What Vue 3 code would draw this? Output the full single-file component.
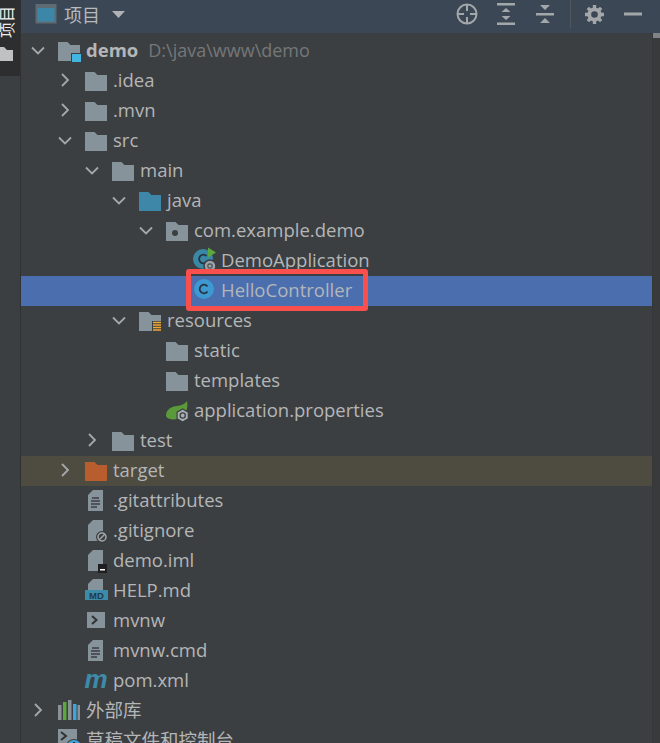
<script setup>
const rows = [
  { d: 0, arrow: 'down', icon: 'module', name: 'demo', bold: true, hint: 'D:\\java\\www\\demo' },
  { d: 1, arrow: 'right', icon: 'folder', name: '.idea' },
  { d: 1, arrow: 'right', icon: 'folder', name: '.mvn' },
  { d: 1, arrow: 'down', icon: 'folder', name: 'src' },
  { d: 2, arrow: 'down', icon: 'folder', name: 'main' },
  { d: 3, arrow: 'down', icon: 'source', name: 'java' },
  { d: 4, arrow: 'down', icon: 'package', name: 'com.example.demo' },
  { d: 5, icon: 'app', name: 'DemoApplication' },
  { d: 5, icon: 'class', name: 'HelloController', selected: true },
  { d: 3, arrow: 'down', icon: 'resources', name: 'resources' },
  { d: 4, icon: 'folder', name: 'static' },
  { d: 4, icon: 'folder', name: 'templates' },
  { d: 4, icon: 'spring', name: 'application.properties' },
  { d: 2, arrow: 'right', icon: 'folder', name: 'test' },
  { d: 1, arrow: 'right', icon: 'excluded', name: 'target', tinted: true },
  { d: 1, icon: 'text', name: '.gitattributes' },
  { d: 1, icon: 'ignore', name: '.gitignore' },
  { d: 1, icon: 'iml', name: 'demo.iml' },
  { d: 1, icon: 'md', name: 'HELP.md' },
  { d: 1, icon: 'shell', name: 'mvnw' },
  { d: 1, icon: 'text', name: 'mvnw.cmd' },
  { d: 1, icon: 'maven', name: 'pom.xml' },
  { d: 0, arrow: 'right', icon: 'libs', name: '外部库' },
  { d: 0, icon: 'scratch', name: '草稿文件和控制台' }
]
const folderPath = 'M0 3h9.500l3 3H22v16H0z'
const pagePath = 'M8 1h10v21H3V6z'
</script>

<template>
  <div class="window">
    <aside class="side">
      <div class="side-tab">
        <span class="side-label">项目</span>
        <svg class="side-folder" width="20" height="14" viewBox="0 0 20 14"><path d="M-6 0h10l3 3h6v11H-6z" fill="#bfc2c3" /></svg>
      </div>
    </aside>

    <main class="panel">
      <header class="toolbar">
        <svg class="panel-icon" width="22" height="22" viewBox="0 0 22 22">
          <rect x="0.500" y="1" width="21" height="19.500" fill="#5f6a72" />
          <rect x="2.500" y="5" width="17" height="13.500" fill="#3c87a8" />
        </svg>
        <span class="title">项目</span>
        <svg class="caret" width="14" height="9" viewBox="0 0 14 9"><path d="M0 1h13L6.500 8z" fill="#b0b3b5" /></svg>
        <div class="tools">
          <svg width="22" height="22" viewBox="0 0 22 22" fill="none" stroke="#a3a7aa" stroke-width="2">
            <circle cx="11" cy="11" r="9.500" />
            <path d="M11 2v6M11 14v6M2 11h6M14 11h6" />
          </svg>
          <svg width="20" height="22" viewBox="0 0 20 22" fill="#a3a7aa">
            <path d="M1 0h18v2.500H1zM1 19.500h18V22H1zM10 5l4.500 4h-9zM10 17l-4.500-4h9z" />
          </svg>
          <svg class="tool-collapse" width="20" height="22" viewBox="0 0 20 22" fill="#a3a7aa">
            <path d="M1 10h18v2.500H1zM5 2h10l-5 5zM5 20h10l-5-5z" />
          </svg>
          <span class="sep"></span>
          <svg class="tool-gear" width="19" height="19" viewBox="0 0 20 20" fill="none" stroke="#a3a7aa">
            <circle cx="10" cy="10" r="5.500" stroke-width="4" />
            <path d="M10 0v4M10 16v4M0 10h4M16 10h4M3 3l3 3M14 14l3 3M17 3l-3 3M6 14l-3 3" stroke-width="3.500" />
          </svg>
          <svg width="18" height="4" viewBox="0 0 18 4"><rect y="0.500" width="18" height="3" fill="#a3a7aa" /></svg>
        </div>
      </header>

      <div class="body">
        <div class="tree">
          <div
            v-for="row in rows"
            :key="row.name"
            class="row"
            :class="{ selected: row.selected, tinted: row.tinted }"
            :style="{ paddingLeft: 10 + row.d * 27 + 'px' }"
          >
            <span class="arrow">
              <svg v-if="row.arrow" width="14" height="14" viewBox="0 0 14 14" fill="none" stroke="#a5a8aa" stroke-width="1.800">
                <path v-if="row.arrow === 'down'" d="M1 4.500 7 10.500l6-6" />
                <path v-else d="M4 1 10 7l-6 6" />
              </svg>
            </span>
            <span class="icon">
              <svg width="26" height="26" viewBox="-2 -2 26 26">
                <template v-if="row.icon === 'folder'"><path :d="folderPath" fill="#87939a" /></template>
                <template v-else-if="row.icon === 'module'">
                  <path :d="folderPath" fill="#87939a" />
                  <rect x="13" y="14" width="10" height="9.500" fill="#3c3f41" />
                  <rect x="14" y="15" width="9" height="8" fill="#40b6e0" />
                </template>
                <template v-else-if="row.icon === 'source'"><path :d="folderPath" fill="#3f87a8" /></template>
                <template v-else-if="row.icon === 'excluded'"><path :d="folderPath" fill="#b85e2e" /></template>
                <template v-else-if="row.icon === 'package'">
                  <path :d="folderPath" fill="#87939a" />
                  <circle cx="9" cy="14" r="3" fill="#3c3f41" />
                </template>
                <template v-else-if="row.icon === 'resources'">
                  <path d="M0 3h9.500l3 3H22v6H13v10H0z" fill="#87939a" />
                  <path d="M14 13.500h8M14 16h8M14 18.500h8M14 21h8" stroke="#f0a732" stroke-width="1.300" />
                </template>
                <template v-else-if="row.icon === 'class'">
                  <circle cx="11" cy="10" r="10" fill="#3d99d1" />
                  <path d="M14.500 7.500a4.300 4.300 0 1 0 0 5" fill="none" stroke="#27343f" stroke-width="1.800" />
                </template>
                <template v-else-if="row.icon === 'app'">
                  <circle cx="10" cy="10" r="10" fill="#3a87a6" />
                  <path d="M13.500 7a4.300 4.300 0 1 0 0 6" fill="none" stroke="#27343f" stroke-width="1.800" />
                  <path d="M15 -1.500l8 5-8 5z" fill="#5aa83e" />
                  <circle cx="17" cy="17" r="6" fill="#9aa4aa" stroke="#3c3f41" stroke-width="1.500" />
                  <circle cx="17" cy="17" r="2.200" fill="none" stroke="#4e5254" stroke-width="1.200" />
                </template>
                <template v-else-if="row.icon === 'spring'">
                  <path d="M0 17C0 10 6 7.500 11 7c4-.500 8-2 10-5 1 6 0 10-3 12l-7 6C6 21 1 20 0 17z" fill="#5b9a3a" />
                  <path d="M16.700 10l5.600 3.200v6.600l-5.600 3.200-5.600-3.200v-6.600z" fill="#a8b0b4" stroke="#3c3f41" stroke-width="1.200" />
                  <circle cx="16.700" cy="16.500" r="2.600" fill="none" stroke="#3c3f41" stroke-width="1.300" />
                </template>
                <template v-else-if="row.icon === 'text'">
                  <path :d="pagePath" fill="#87939a" />
                  <path d="M7 9h7M6 12h9M6 15h9M6 18h6" stroke="#3c3f41" stroke-width="1.300" />
                </template>
                <template v-else-if="row.icon === 'ignore'">
                  <path :d="pagePath" fill="#87939a" />
                  <circle cx="17" cy="18" r="6" fill="#3c3f41" />
                  <circle cx="17" cy="18" r="4" fill="none" stroke="#a0a8ad" stroke-width="1.500" />
                  <path d="M14 21l6-6" stroke="#a0a8ad" stroke-width="1.500" />
                </template>
                <template v-else-if="row.icon === 'iml'">
                  <path :d="pagePath" fill="#87939a" />
                  <rect x="13" y="15" width="9" height="9" fill="#1e1f20" />
                  <rect x="15" y="20" width="5" height="1.500" fill="#fff" />
                </template>
                <template v-else-if="row.icon === 'md'">
                  <path d="M8 0h10v12H3V5z" fill="#87939a" />
                  <rect x="0" y="11" width="23" height="10" fill="#3d8bab" />
                  <text x="11.500" y="19.500" class="md-text">MD</text>
                </template>
                <template v-else-if="row.icon === 'shell'">
                  <rect x="2" y="3" width="18" height="16" fill="#87939a" />
                  <path d="M7 7l4.500 4L7 15" fill="none" stroke="#2f3335" stroke-width="2" />
                </template>
                <template v-else-if="row.icon === 'maven'">
                  <text x="11" y="19" class="m-text">m</text>
                </template>
                <template v-else-if="row.icon === 'libs'">
                  <rect x="0" y="6" width="3.500" height="15" fill="#8a9297" />
                  <rect x="5" y="3" width="3.500" height="18" fill="#5aa83e" />
                  <rect x="10" y="1" width="3.500" height="20" fill="#8a9297" />
                  <rect x="15" y="5" width="3.500" height="16" fill="#40a5dd" />
                  <rect x="19.500" y="6" width="2.500" height="15" fill="#8a9297" />
                </template>
                <template v-else-if="row.icon === 'scratch'">
                  <rect x="0" y="0" width="19" height="18" fill="#87939a" />
                  <path d="M3 3l5 4-5 4" fill="none" stroke="#2f3335" stroke-width="2" />
                  <circle cx="16" cy="18" r="8" fill="#3c3f41" />
                  <circle cx="16" cy="18" r="7" fill="#40a5dd" />
                  <rect x="15" y="13" width="2" height="5" fill="#1e2b33" />
                </template>
              </svg>
            </span>
            <span class="name" :class="{ bold: row.bold }">{{ row.name }}</span>
            <span v-if="row.hint" class="hint">{{ row.hint }}</span>
          </div>
          <div class="callout"></div>
        </div>
        <div class="scroll"><span class="thumb"></span></div>
      </div>
    </main>
  </div>
</template>

<style scoped>
.window {
  width: 660px;
  height: 743px;
  display: flex;
  overflow: hidden;
  background: #3c3f41;
  font-family: "Open Sans", "Noto Sans CJK SC", sans-serif;
  color: #b4b6b8;
}
.side {
  width: 20px;
  flex: none;
  border-right: 1px solid #2f3132;
  background: #3c3f41;
}
.side-tab {
  height: 76px;
  background: #2d2e2f;
  overflow: hidden;
}
.side-label {
  display: block;
  color: #eee;
  font-size: 16px;
  line-height: 16px;
  width: 16px;
  height: 38px;
  margin-left: -2px;
  writing-mode: vertical-rl;
  text-orientation: sideways;
  transform: rotate(180deg);
  white-space: nowrap;
  font-family: "Noto Sans CJK SC", sans-serif;
}
.side-folder {
  display: block;
  margin-top: 9px;
}
.panel {
  flex: 1;
  min-width: 0;
  display: flex;
  flex-direction: column;
}
.toolbar {
  height: 33px;
  flex: none;
  box-sizing: border-box;
  display: flex;
  align-items: center;
  padding: 0 18px 5px 14px;
  background: #3b4754;
}
.panel-icon {
  margin-right: 7px;
}
.title {
  font-size: 18px;
  line-height: 28px;
  color: #b8babc;
  margin-right: 12px;
  font-family: "Noto Sans CJK SC", sans-serif;
}
.tools {
  margin-left: auto;
  display: flex;
  align-items: center;
  gap: 18px;
}
.tool-collapse {
  margin-left: 1px;
}
.tool-gear {
  margin-right: 2px;
}
.sep {
  width: 1px;
  height: 28px;
  background: #50565c;
  margin: 0 -4px 0 -3px;
}
.body {
  flex: 1;
  min-height: 0;
  display: flex;
}
.tree {
  flex: 1;
  min-width: 0;
  padding-top: 3px;
  position: relative;
}
.row {
  height: 30px;
  box-sizing: border-box;
  padding-bottom: 2px;
  display: flex;
  align-items: center;
  white-space: nowrap;
  font-size: 18.500px;
}
.row.selected {
  background: #4b6eaf;
}
.row.tinted {
  background: #4e4b41;
}
.arrow {
  width: 27px;
  flex: none;
  display: flex;
}
.icon {
  width: 27px;
  flex: none;
  display: flex;
  margin-right: 1px;
}
.icon svg {
  margin-left: -2px;
  flex: none;
}
.name {
  line-height: 28px;
}
.name.bold {
  font-weight: 700;
}
.hint {
  margin-left: 10px;
  color: #757779;
  font-size: 18px;
}
.md-text {
  font-family: "Liberation Sans", sans-serif;
  font-size: 9.500px;
  font-weight: 700;
  fill: #1f3a46;
  text-anchor: middle;
}
.m-text {
  font-family: "Liberation Sans", sans-serif;
  font-size: 26px;
  font-weight: 700;
  font-style: italic;
  fill: #3d8bab;
  text-anchor: middle;
}
.callout {
  position: absolute;
  left: 165px;
  top: 236px;
  width: 182px;
  height: 42px;
  box-sizing: border-box;
  border: 5px solid #f9504e;
  border-radius: 3px;
  pointer-events: none;
}
.scroll {
  width: 7px;
  flex: none;
  background: #383a3c;
  border-left: 1px solid #343638;
}
.thumb {
  display: block;
  height: 5px;
  background: #808487;
}
</style>

<style>
html, body { margin: 0; background: #3c3f41; }
</style>
